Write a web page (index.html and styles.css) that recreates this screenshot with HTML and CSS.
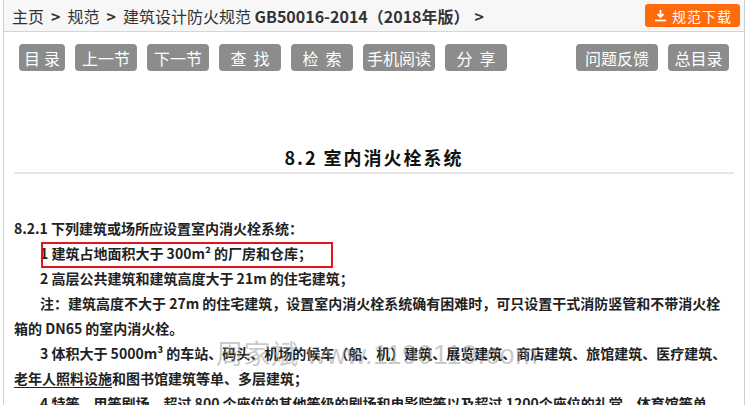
FILE: index.html
```html
<!DOCTYPE html>
<html lang="zh-CN">
<head>
  <meta charset="UTF-8">
  <meta name="viewport" content="width=device-width, initial-scale=1.0">
  <title>8.2 室内消火栓系统</title>
  <link rel="stylesheet" href="styles.css">
</head>
<body>
  <div class="page">
    <div class="crumbs">
      <div class="crumb-path">
        <a href="#">主页</a><span class="sep">&gt;</span><a href="#">规范</a><span class="sep">&gt;</span><a href="#">建筑设计防火规范 <b>GB50016-2014（2018年版）</b></a><span class="sep end">&gt;</span>
      </div>
      <a class="download" href="#">
        <svg width="13" height="13" viewBox="0 0 13 13">
          <path d="M6.5 1v7M3.5 5l3 3 3-3" fill="none" stroke="#fff" stroke-width="1.8"/>
          <path d="M1 11.5h11" stroke="#fff" stroke-width="1.8"/>
        </svg>
        规范下载
      </a>
    </div>

    <div class="toolbar">
      <div class="tool-group">
        <a class="tool w-46 ls-4" href="#">目录</a>
        <a class="tool" href="#">上一节</a>
        <a class="tool" href="#">下一节</a>
        <a class="tool ls-7" href="#">查找</a>
        <a class="tool ls-7" href="#">检索</a>
        <a class="tool w-72" href="#">手机阅读</a>
        <a class="tool ls-7" href="#">分享</a>
      </div>
      <div class="tool-group">
        <a class="tool w-82" href="#">问题反馈</a>
        <a class="tool w-61" href="#">总目录</a>
      </div>
    </div>

    <h1 class="section-title">8.2 室内消火栓系统</h1>

    <div class="content">
      <p>8.2.1 下列建筑或场所应设置室内消火栓系统：</p>
      <p class="indent marked">1 建筑占地面积大于 300m² 的厂房和仓库；<span class="mark-box"></span></p>
      <p class="indent">2 高层公共建筑和建筑高度大于 21m 的住宅建筑；</p>
      <p class="indent">注：建筑高度不大于 27m 的住宅建筑，设置室内消火栓系统确有困难时，可只设置干式消防竖管和不带消火栓箱的 DN65 的室内消火栓。</p>
      <p class="indent">3 体积大于 5000m³ 的车站、码头、机场的候车（船、机）建筑、展览建筑、商店建筑、旅馆建筑、医疗建筑、<u>老年人照料设施</u>和图书馆建筑等单、多层建筑；</p>
      <p class="indent">4 特等、甲等剧场，超过 800 个座位的其他等级的剧场和电影院等以及超过 1200个座位的礼堂、体育馆等单、多层建筑；</p>

      <div class="watermark"><span class="wm-name">周家斌</span> www.1190119.com</div>
    </div>
  </div>
</body>
</html>
```

FILE: styles.css
```css
body {
  margin: 0;
  background-color: #fff;
  font-family: "Noto Sans CJK SC", "Noto Sans", sans-serif;
  color: #222;
}

a {
  color: inherit;
  text-decoration: none;
}

.page {
  margin-left: 3px;
  width: 740px;
  height: 405px;
  overflow: hidden;
  border-left: 1px solid #cfcfcf;
  border-right: 1px solid #cfcfcf;
}

.crumbs {
  display: flex;
  align-items: center;
  justify-content: space-between;
  height: 31px;
  padding: 0 4px 0 8px;
  background-color: #f7f7f7;
  border-bottom: 1px solid #d6d6d6;
}

.crumb-path {
  font-size: 16px;
  color: #333;
  white-space: nowrap;
}

.crumb-path .sep {
  margin: 0 7px;
  font-weight: bold;
}

.crumb-path .end {
  margin-left: 5px;
}

.download {
  display: flex;
  align-items: center;
  gap: 5px;
  height: 23px;
  padding: 0 8px 0 9px;
  background-color: #ff6a0a;
  border-radius: 3px;
  color: #fff;
  font-size: 14px;
  letter-spacing: 1px;
}

.toolbar {
  display: flex;
  justify-content: space-between;
  padding: 12px 15px 0 15px;
}

.tool-group {
  display: flex;
  gap: 10px;
}

.tool {
  display: flex;
  align-items: center;
  justify-content: center;
  width: 62px;
  height: 27px;
  background-color: #8c8c8c;
  border-radius: 4px;
  color: #fff;
  font-size: 16px;
}

.w-46 { width: 46px; }
.w-61 { width: 61px; }
.w-72 { width: 72px; }
.w-82 { width: 82px; }
.ls-4 { letter-spacing: 4px; text-indent: 4px; }
.ls-7 { letter-spacing: 7px; text-indent: 7px; }

.section-title {
  margin: 71px 10px 0 10px;
  height: 30px;
  line-height: 30px;
  border-bottom: 2px solid #e6e6e6;
  text-align: center;
  font-size: 18px;
  letter-spacing: 2px;
  color: #111;
}

.content {
  position: relative;
  padding: 42px 11px 0 10px;
  font-size: 14px;
  font-weight: bold;
  line-height: 25px;
}

.content p {
  margin: 0;
}

.content .indent {
  text-indent: 26px;
}

.marked {
  position: relative;
}

.mark-box {
  position: absolute;
  top: 1px;
  left: 27px;
  width: 288px;
  height: 22px;
  border: 2px solid #e3141b;
}

.content u {
  text-decoration-thickness: 1px;
  text-underline-offset: 3px;
}

.watermark {
  position: absolute;
  top: 166px;
  left: 212px;
  font-family: "Liberation Sans", sans-serif;
  font-size: 27px;
  font-weight: normal;
  letter-spacing: 0.5px;
  color: rgba(150, 150, 150, 0.5);
  white-space: nowrap;
}

.wm-name {
  font-family: "Noto Sans CJK SC", sans-serif;
}
```
